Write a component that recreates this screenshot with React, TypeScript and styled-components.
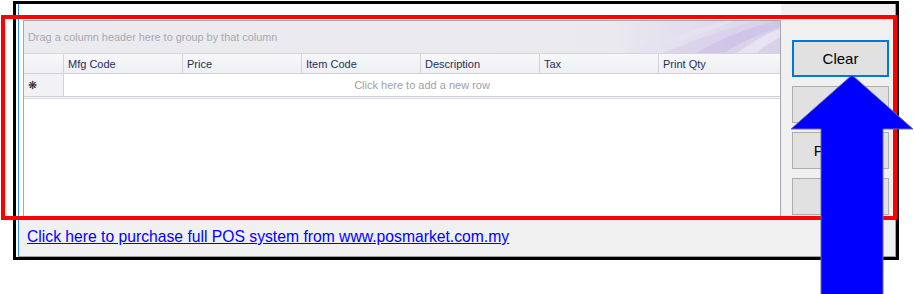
import * as React from 'react';
import styled, { createGlobalStyle } from 'styled-components';

const GlobalStyle = createGlobalStyle`
  html, body {
    margin: 0;
    padding: 0;
    background: #ffffff;
    overflow: hidden;
  }
`;

const Stage = styled.div`
  position: relative;
  width: 914px;
  height: 294px;
  font-family: 'Liberation Sans', Arial, sans-serif;
`;

const Frame = styled.div`
  margin: 1px 0 0 13px;
  width: 886px;
  height: 259px;
  box-sizing: border-box;
  border: 3px solid #000000;
  background: #ffffff;
  padding-left: 2px;
`;

const Inner = styled.div`
  display: flex;
  flex-direction: column;
  height: 100%;
  box-sizing: border-box;
  border-left: 1px solid #3b8de0;
  border-right: 1px solid #a0a0a0;
  border-bottom: 1px solid #a0a0a0;
`;

const Main = styled.div`
  display: flex;
  height: 214px;
`;

const GridArea = styled.div`
  width: 762px;
  background: #ffffff;
  padding: 16px 0 0 4px;
  box-sizing: border-box;
  overflow: hidden;
`;

const Grid = styled.div`
  width: 758px;
  height: 220px;
  box-sizing: border-box;
  border: 1px solid #a6a6ae;
  border-bottom: none;
  background: #ffffff;
  font-size: 11px;
`;

const GroupPanel = styled.div`
  position: relative;
  height: 33px;
  display: flex;
  align-items: center;
  padding-left: 4px;
  overflow: hidden;
  border-bottom: 1px solid #d4d4da;
  box-sizing: border-box;
  background: linear-gradient(90deg, #ebebef 0%, #e9e9ee 78%, #e0dcee 90%, #dad4ea 100%);
  color: #a7a8b2;
  font-size: 10.9px;
`;

const Swoosh = styled.svg`
  position: absolute;
  right: 0;
  top: 0;
`;

const GroupText = styled.span`
  position: relative;
`;

const Row = styled.div<{ $h: number; $bg: string }>`
  display: grid;
  grid-template-columns: 40px 119px 119px 119px 119px 119px 1fr;
  height: ${(p) => p.$h}px;
  background: ${(p) => p.$bg};
  box-sizing: border-box;
`;

const HeaderCell = styled.div`
  display: flex;
  align-items: center;
  padding-left: 4px;
  border-right: 1px solid #d2d2d9;
  border-bottom: 1px solid #d2d2d9;
  color: #1f2d5c;
  background: linear-gradient(#f8f8fa, #eeeff2);
  &:last-child {
    border-right: none;
  }
`;

const Indicator = styled.div`
  display: flex;
  align-items: center;
  padding-left: 4px;
  border-right: 1px solid #d2d2d9;
  background: #f2f2f4;
  color: #1f2230;
  font-size: 11px;
`;

const NewRowText = styled.div`
  grid-column: 2 / -1;
  display: flex;
  align-items: center;
  justify-content: center;
  color: #9c9fab;
`;

const RowDivider = styled.div`
  height: 3px;
  border-top: 1px solid #cfcfd6;
  border-bottom: 1px solid #dcdce2;
  background: #f4f4f6;
  box-sizing: border-box;
`;

const SidePanel = styled.div`
  flex: 1;
  display: flex;
  flex-direction: column;
  gap: 9px;
  padding: 36px 0 0 11px;
  background: #f0f0f0;
  overflow: hidden;
`;

const SideButton = styled.button<{ $focused?: boolean }>`
  flex: none;
  width: 97px;
  height: 37px;
  box-sizing: border-box;
  padding: 0;
  background: #e1e1e1;
  border: ${(p) => (p.$focused ? '2px solid #0078d7' : '1px solid #adadad')};
  font-family: 'Liberation Sans', Arial, sans-serif;
  font-size: 15px;
  color: #000000;
  text-align: center;
`;

const BottomBar = styled.div`
  flex: 1;
  display: flex;
  align-items: center;
  padding-left: 8px;
  background: #f0f0f0;
`;

const PurchaseLink = styled.a`
  color: #0000ff;
  text-decoration: underline;
  font-size: 15.7px;
  cursor: pointer;
`;

const Highlight = styled.div`
  position: absolute;
  left: 1px;
  top: 14px;
  width: 896px;
  height: 205px;
  box-sizing: border-box;
  border: 4px solid #ff0000;
  pointer-events: none;
`;

const Pointer = styled.svg`
  position: absolute;
  left: 0;
  top: 0;
  pointer-events: none;
`;

const columns = ['Mfg Code', 'Price', 'Item Code', 'Description', 'Tax', 'Print Qty'];

export default function App() {
  return (
    <Stage>
      <GlobalStyle />
      <Frame>
        <Inner>
          <Main>
            <GridArea>
              <Grid>
                <GroupPanel>
                  <Swoosh width="170" height="33" viewBox="0 0 170 33">
                    <path d="M50 33 C 85 20, 115 6, 150 0 L 170 0 L 170 33 Z" fill="#d8cfea" opacity="0.7" />
                    <path d="M85 33 C 110 18, 135 8, 165 0 L 170 0 L 170 6 C 148 14, 125 24, 112 33 Z" fill="#c9bde6" opacity="0.6" />
                    <path d="M10 33 C 45 22, 80 10, 115 0 L 125 0 C 92 12, 60 24, 38 33 Z" fill="#e6e1f1" opacity="0.9" />
                    <path d="M125 33 C 142 22, 156 12, 170 8 L 170 16 C 160 22, 150 28, 146 33 Z" fill="#e9e4f4" opacity="0.9" />
                  </Swoosh>
                  <GroupText>Drag a column header here to group by that column</GroupText>
                </GroupPanel>
                <Row $h={20} $bg="#f4f4f6">
                  <HeaderCell />
                  {columns.map((c) => (
                    <HeaderCell key={c}>{c}</HeaderCell>
                  ))}
                </Row>
                <Row $h={22} $bg="#ffffff">
                  <Indicator>❋</Indicator>
                  <NewRowText>Click here to add a new row</NewRowText>
                </Row>
                <RowDivider />
              </Grid>
            </GridArea>
            <SidePanel>
              <SideButton $focused>Clear</SideButton>
              <SideButton>Print</SideButton>
              <SideButton>Preview</SideButton>
              <SideButton>Close</SideButton>
            </SidePanel>
          </Main>
          <BottomBar>
            <PurchaseLink>Click here to purchase full POS system from www.posmarket.com.my</PurchaseLink>
          </BottomBar>
        </Inner>
      </Frame>
      <Highlight />
      <Pointer width="914" height="294" viewBox="0 0 914 294">
        <polygon
          points="852,74 913,128 883,128 883,294 821,294 821,128 791,128"
          fill="#0000ff"
          stroke="#6a6aa8"
          strokeWidth="1"
        />
      </Pointer>
    </Stage>
  );
}
